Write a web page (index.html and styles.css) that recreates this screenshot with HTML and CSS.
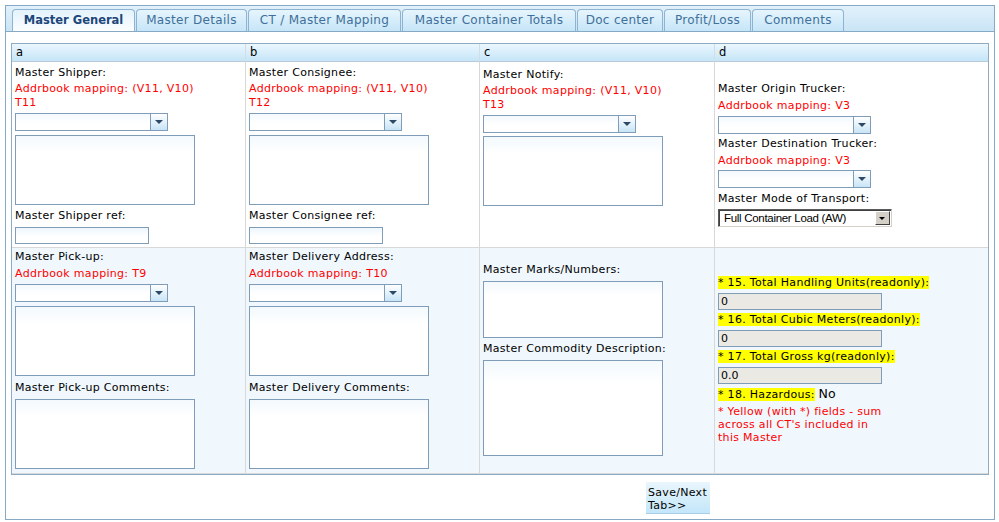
FILE: index.html
```html
<!DOCTYPE html>
<html>
<head>
<meta charset="utf-8">
<title>Master General</title>
<link rel="stylesheet" href="styles.css">
</head>
<body>
<div class="frame">
  <div class="tabs">
    <div class="tab active t-general">Master General</div>
    <div class="tab t-details">Master Details</div>
    <div class="tab t-mapping">CT / Master Mapping</div>
    <div class="tab t-totals">Master Container Totals</div>
    <div class="tab t-doc">Doc center</div>
    <div class="tab t-pl">Profit/Loss</div>
    <div class="tab t-comments">Comments</div>
  </div>
  <div class="panel">
    <div class="grid">
      <div class="hd">a</div>
      <div class="hd">b</div>
      <div class="hd">c</div>
      <div class="hd last">d</div>

      <div class="cell r1 pa">
        <div class="lbl">Master Shipper:</div>
        <div class="map">Addrbook mapping: (V11, V10)<br>T11</div>
        <div class="combo"><span class="combo-btn"></span></div>
        <textarea class="ta"></textarea>
        <div class="lbl gap">Master Shipper ref:</div>
        <input class="txt" type="text">
      </div>
      <div class="cell r1 pa">
        <div class="lbl">Master Consignee:</div>
        <div class="map">Addrbook mapping: (V11, V10)<br>T12</div>
        <div class="combo"><span class="combo-btn"></span></div>
        <textarea class="ta"></textarea>
        <div class="lbl gap">Master Consignee ref:</div>
        <input class="txt" type="text">
      </div>
      <div class="cell r1 pc">
        <div class="lbl">Master Notify:</div>
        <div class="map">Addrbook mapping: (V11, V10)<br>T13</div>
        <div class="combo"><span class="combo-btn"></span></div>
        <textarea class="ta tight"></textarea>
      </div>
      <div class="cell r1 pd last">
        <div class="lbl">Master Origin Trucker:</div>
        <div class="map m3">Addrbook mapping: V3</div>
        <div class="combo"><span class="combo-btn"></span></div>
        <div class="lbl g3">Master Destination Trucker:</div>
        <div class="map m3">Addrbook mapping: V3</div>
        <div class="combo c2"><span class="combo-btn"></span></div>
        <div class="lbl g4">Master Mode of Transport:</div>
        <div class="select"><span class="select-text">Full Container Load (AW)</span><span class="select-btn"></span></div>
      </div>

      <div class="cell r2 pa2">
        <div class="lbl">Master Pick-up:</div>
        <div class="map m3">Addrbook mapping: T9</div>
        <div class="combo"><span class="combo-btn"></span></div>
        <textarea class="ta"></textarea>
        <div class="lbl g5">Master Pick-up Comments:</div>
        <textarea class="ta"></textarea>
      </div>
      <div class="cell r2 pa2">
        <div class="lbl">Master Delivery Address:</div>
        <div class="map m3">Addrbook mapping: T10</div>
        <div class="combo"><span class="combo-btn"></span></div>
        <textarea class="ta"></textarea>
        <div class="lbl g5">Master Delivery Comments:</div>
        <textarea class="ta"></textarea>
      </div>
      <div class="cell r2 pc2">
        <div class="lbl">Master Marks/Numbers:</div>
        <textarea class="ta short"></textarea>
        <div class="lbl gap">Master Commodity Description:</div>
        <textarea class="ta tall"></textarea>
      </div>
      <div class="cell r2 pd2 last">
        <div class="ylw-row first"><span class="ylw">* 15. Total Handling Units(readonly):</span></div>
        <input class="ro" type="text" value="0" readonly>
        <div class="ylw-row"><span class="ylw">* 16. Total Cubic Meters(readonly):</span></div>
        <input class="ro" type="text" value="0" readonly>
        <div class="ylw-row"><span class="ylw">* 17. Total Gross kg(readonly):</span></div>
        <input class="ro" type="text" value="0.0" readonly>
        <div class="ylw-row"><span class="ylw">* 18. Hazardous:</span> <span class="val">No</span></div>
        <div class="note">* Yellow (with *) fields - sum<br>across all CT's included in<br>this Master</div>
      </div>
    </div>
    <div class="actions">
      <button class="save" type="button">Save/Next<br>Tab&gt;&gt;</button>
    </div>
  </div>
</div>
</body>
</html>
```

FILE: styles.css
```css
* { box-sizing: border-box; }

html, body {
  margin: 0;
  padding: 0;
  background: #ffffff;
}

body {
  font-family: "DejaVu Sans", Verdana, sans-serif;
  font-size: 11px;
  line-height: 14px;
  letter-spacing: 0.3px;
  color: #000;
}

.frame {
  margin: 5px 0 0 5px;
  width: 990px;
  height: 515px;
  border: 1px solid #86a9c5;
  display: flex;
  flex-direction: column;
}

/* ---------- tabs ---------- */
.tabs {
  display: flex;
  align-items: flex-end;
  gap: 1px;
  height: 26px;
  padding: 3px 0 0 6px;
  background: linear-gradient(#e2f1fb, #c9e4f5);
  border-bottom: 1px solid #86a9c5;
}

.tab {
  height: 22px;
  padding: 0 0 1px 0;
  display: flex;
  align-items: center;
  justify-content: center;
  font-size: 12px;
  letter-spacing: 0.3px;
  color: #3f6f9a;
  background: linear-gradient(#e6f5fd, #c6e5f8);
  border: 1px solid #8fb4d1;
  border-bottom: none;
  border-radius: 4px 4px 0 0;
  white-space: nowrap;
}

.tab.active {
  font-weight: bold;
  font-size: 11.5px;
  letter-spacing: 0;
  color: #1b477a;
  background: linear-gradient(#e4f3fc, #fbfdff);
}

.t-general  { width: 123px; }
.t-details  { width: 111px; }
.t-mapping  { width: 153px; }
.t-totals   { width: 174px; }
.t-doc      { width: 86px; }
.t-pl       { width: 87px; }
.t-comments { width: 92px; }

/* ---------- panel / grid ---------- */
.panel {
  flex: 1;
  padding: 11px 5px 0 5px;
  background: #fff;
}

.grid {
  display: grid;
  grid-template-columns: 234px 234px 235px 273px;
  grid-template-rows: 18px 186px 226px;
  width: 978px;
  border: 1px solid #8fabc2;
}

.hd {
  padding: 1px 0 0 4px;
  line-height: 15px;
  font-size: 11.5px;
  background: linear-gradient(#ebf7fe, #c5e5f8);
  border-right: 1px solid #d4dde4;
  border-bottom: 1px solid #b9cbd8;
}

.cell {
  padding-left: 3px;
  border-right: 1px solid #d8d8d8;
  border-bottom: 1px solid #d8d8d8;
}

.hd.last, .cell.last { border-right: none; }

.r1 { background: #fff; }
.r2 { background: #f0f8fe; }

.pa  { padding-top: 4px; }
.pc  { padding-top: 6px; }
.pd  { padding-top: 20px; }
.pa2 { padding-top: 2px; }
.pc2 { padding-top: 15px; }
.pd2 { padding-top: 28px; }

.lbl { color: #000; }
.lbl.gap { margin-top: 4px; }
.lbl.g3 { margin-top: 3px; }
.lbl.g4 { margin-top: 4px; }
.lbl.g5 { margin-top: 5px; }

.map {
  color: #ff0000;
  margin-top: 2px;
}
.map.m3 { margin-top: 3px; }

/* ---------- combo ---------- */
.combo {
  position: relative;
  width: 153px;
  height: 18px;
  margin-top: 3px;
  border: 1px solid #7f9db9;
  background: linear-gradient(#f4f9fd, #ffffff 60%);
}
.combo.c2 { margin-top: 2px; }

.combo-btn {
  position: absolute;
  top: 0;
  right: 0;
  width: 17px;
  height: 16px;
  border-left: 1px solid #7f9db9;
  background: linear-gradient(#ffffff, #c8e4f6);
}
.combo-btn::after {
  content: "";
  position: absolute;
  left: 4px;
  top: 6px;
  border-left: 4px solid transparent;
  border-right: 4px solid transparent;
  border-top: 4px solid #2c4a68;
}

/* ---------- text inputs ---------- */
.ta {
  display: block;
  width: 180px;
  height: 70px;
  margin: 4px 0 0 0;
  padding: 0;
  border: 1px solid #7f9db9;
  background: linear-gradient(#f3f9fd, #ffffff 25%);
  resize: none;
  font: inherit;
}
.ta.tight { margin-top: 3px; }
.ta.short { height: 57px; }
.ta.tall { height: 96px; }

.txt {
  display: block;
  width: 134px;
  height: 17px;
  margin: 4px 0 0 0;
  padding: 0;
  border: 1px solid #7f9db9;
  background: linear-gradient(#eef7fd, #ffffff 60%);
  font: inherit;
}

.ro {
  display: block;
  width: 164px;
  height: 17px;
  margin: 3px 0 0 0;
  padding: 0 0 0 2px;
  border: 1px solid #7f9db9;
  background: #ebe9e4;
  font: inherit;
  font-size: 11px;
  color: #000;
}

/* ---------- classic select ---------- */
.select {
  position: relative;
  width: 174px;
  height: 18px;
  margin-top: 3px;
  border-top: 1px solid #5a5a5a;
  border-left: 1px solid #5a5a5a;
  border-right: 1px solid #d4d0c8;
  border-bottom: 1px solid #d4d0c8;
  box-shadow: inset 1px 1px 0 #404040;
  background: #fff;
}
.select-text {
  position: absolute;
  left: 5px;
  top: 1px;
  font-family: "Liberation Sans", Arial, sans-serif;
  font-size: 11.5px;
  line-height: 15px;
  letter-spacing: -0.3px;
  color: #000;
}
.select-btn {
  position: absolute;
  right: 1px;
  top: 1px;
  width: 15px;
  height: 14px;
  background: #d4d0c8;
  border-top: 1px solid #ffffff;
  border-left: 1px solid #ffffff;
  border-right: 1px solid #404040;
  border-bottom: 1px solid #404040;
}
.select-btn::after {
  content: "";
  position: absolute;
  left: 3px;
  top: 5px;
  border-left: 3px solid transparent;
  border-right: 3px solid transparent;
  border-top: 3px solid #000;
}

/* ---------- yellow totals ---------- */
.ylw-row { margin-top: 3px; }
.ylw-row.first { margin-top: 0; }
.ylw { background: #ffff00; }
.val { font-size: 12.5px; letter-spacing: 0; }

.note {
  margin-top: 3px;
  color: #ff0000;
  line-height: 13px;
}

/* ---------- actions ---------- */
.actions {
  padding: 7px 0 0 635px;
}
.save {
  display: block;
  width: 64px;
  height: 32px;
  margin: 0;
  padding: 2px 0 0 2px;
  text-align: left;
  font-family: "DejaVu Sans", Verdana, sans-serif;
  font-size: 11px;
  line-height: 13px;
  letter-spacing: 0.3px;
  color: #000;
  border: none;
  border-bottom: 1px solid #a8cde6;
  background: linear-gradient(#e9f6fd, #c3e6f9);
}
```
